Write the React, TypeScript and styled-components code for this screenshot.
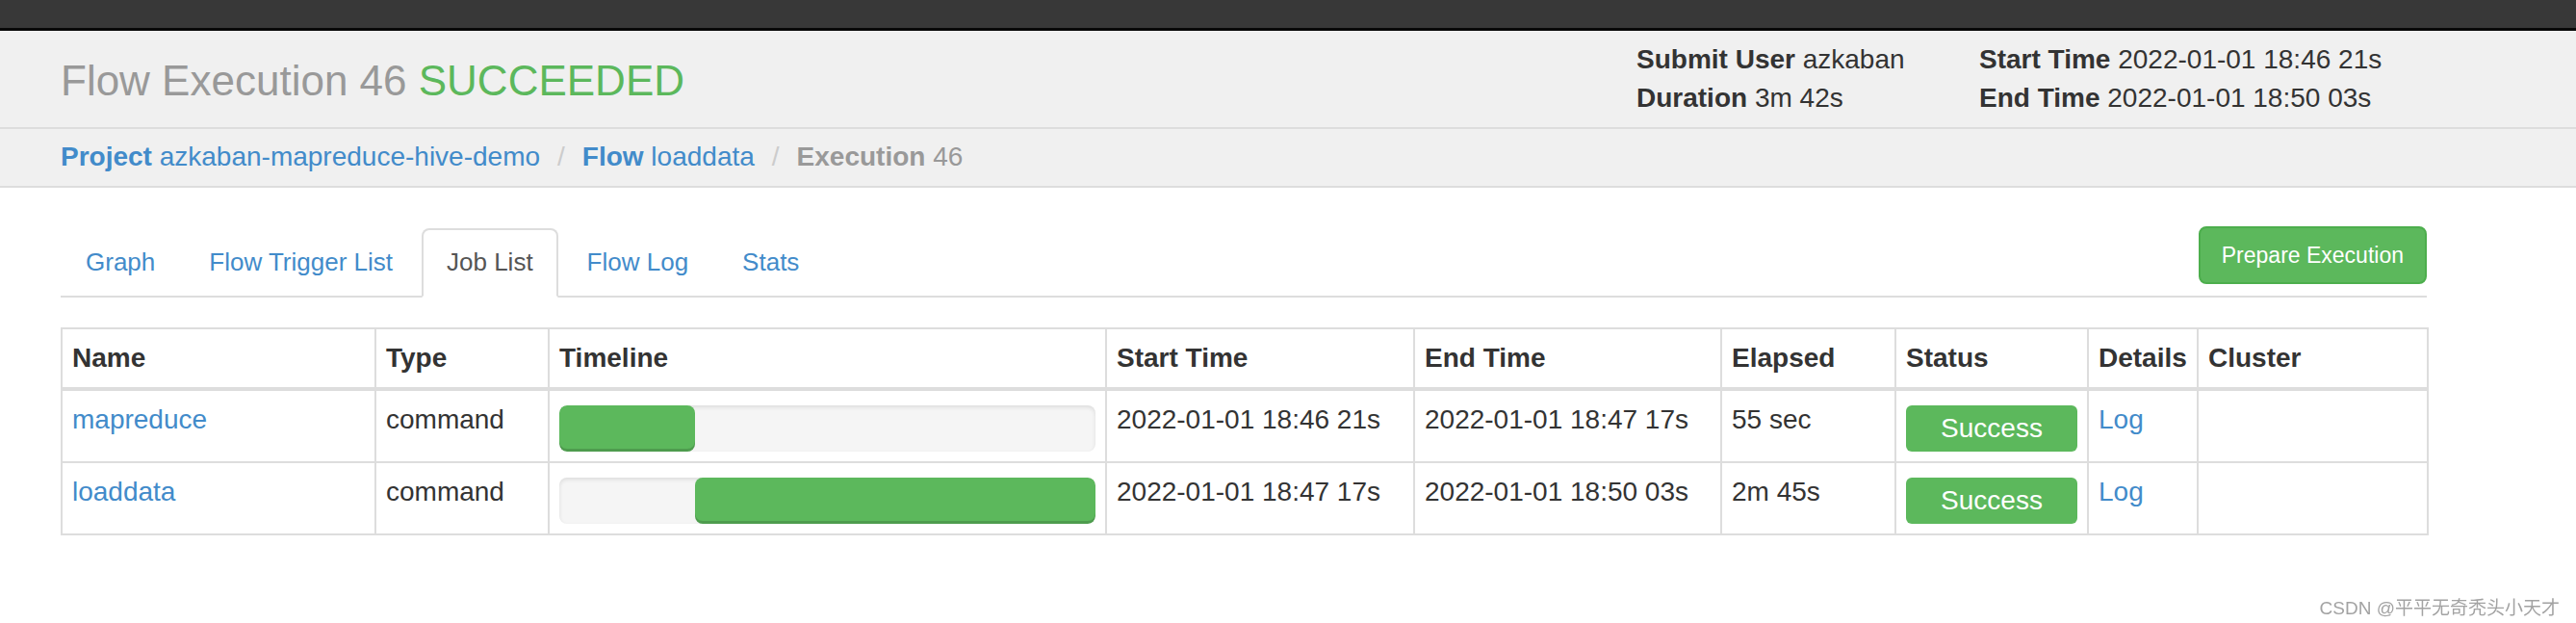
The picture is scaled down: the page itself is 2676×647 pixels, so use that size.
import React from 'react';
import styled, { createGlobalStyle } from 'styled-components';

const GlobalStyle = createGlobalStyle`
    html, body {
        margin: 0;
        padding: 0;
        background: #fff;
    }
    body {
        font-family: "Liberation Sans", Arial, "Noto Sans CJK SC", sans-serif;
        font-size: 28px;
        line-height: 40px;
        color: #333;
    }
`;

const TopNav = styled.div`
    height: 29px;
    background: #383838;
    border-bottom: 3px solid #080808;
`;

const PageHeader = styled.div`
    display: flex;
    align-items: center;
    height: 100px;
    padding: 0 200px 0 63px;
    background: #f0f0f0;
    border-bottom: 2px solid #ddd;
`;

const Title = styled.h1`
    flex: 1;
    margin: 0;
    padding-top: 4px;
    font-size: 44px;
    line-height: 52px;
    font-weight: normal;
    color: #999;
`;

const TitleStatus = styled.span`
    color: #5cb85c;
`;

const MetaGrid = styled.div`
    display: grid;
    grid-template-columns: 356px 420px;
`;

const MetaItem = styled.div`
    white-space: nowrap;
`;

const Breadcrumb = styled.div`
    display: flex;
    padding: 9px 63px 10px;
    background: #f0f0f0;
    border-bottom: 2px solid #ddd;
`;

const Crumb = styled.a<{ $active?: boolean }>`
    color: ${(p) => (p.$active ? '#999' : '#428bca')};
    text-decoration: none;
    white-space: nowrap;
`;

const Separator = styled.span`
    padding: 0 18px;
    color: #ccc;
`;

const Content = styled.div`
    width: 2458px;
    margin: 42px 0 0 63px;
`;

const TabBar = styled.ul`
    display: flex;
    margin: 0;
    padding: 0;
    list-style: none;
    border-bottom: 2px solid #ddd;
`;

const TabItem = styled.li`
    margin: 0 4px -2px 0;
`;

const TabLink = styled.a<{ $active?: boolean }>`
    display: block;
    padding: 13px 24px 15px;
    font-size: 26px;
    line-height: 40px;
    border: 2px solid transparent;
    border-radius: 8px 8px 0 0;
    text-decoration: none;
    color: ${(p) => (p.$active ? '#555' : '#428bca')};
    background: ${(p) => (p.$active ? '#fff' : 'transparent')};
    border-color: ${(p) => (p.$active ? '#ddd #ddd transparent' : 'transparent')};
`;

const ButtonItem = styled.li`
    margin-left: auto;
    margin-top: -2px;
    align-self: flex-start;
`;

const PrepareButton = styled.button`
    height: 60px;
    padding: 0 22px;
    background: #5cb85c;
    border: 2px solid #4cae4c;
    border-radius: 8px;
    color: #fff;
    font-family: "Liberation Sans", Arial, sans-serif;
    font-size: 23px;
    cursor: pointer;
`;

const JobTable = styled.table`
    width: 2458px;
    margin-top: 31px;
    border-collapse: collapse;
    table-layout: fixed;
    border: 2px solid #ddd;
`;

const Col = styled.col<{ $w: number }>`
    width: ${(p) => p.$w}px;
`;

const HeadCell = styled.th`
    padding: 10px;
    text-align: left;
    font-weight: bold;
    vertical-align: top;
    border: 2px solid #ddd;
    border-bottom-width: 4px;
`;

const Cell = styled.td`
    padding: 10px;
    vertical-align: top;
    white-space: nowrap;
    border: 2px solid #ddd;
`;

const TableLink = styled.a`
    color: #428bca;
    text-decoration: none;
`;

const Timeline = styled.div`
    height: 48px;
    margin-top: 5px;
    background: #f5f5f5;
    border-radius: 8px;
    box-shadow: inset 0 2px 4px rgba(0, 0, 0, 0.1);
    overflow: hidden;
`;

const TimelineBar = styled.div`
    height: 100%;
    background: #5cb85c;
    border-radius: 8px;
    box-shadow: inset 0 -3px 0 rgba(0, 0, 0, 0.15);
`;

const StatusLabel = styled.div`
    height: 48px;
    margin-top: 5px;
    line-height: 48px;
    text-align: center;
    color: #fff;
    background: #5cb85c;
    border-radius: 6px;
`;

const Watermark = styled.div`
    position: fixed;
    right: 17px;
    bottom: 3px;
    font-size: 19px;
    line-height: 24px;
    color: #a3a3a3;
    font-family: "Liberation Sans", Arial, "Noto Sans CJK SC", sans-serif;
`;

interface Job {
    name: string;
    type: string;
    start: number;
    end: number;
    startText: string;
    endText: string;
    elapsed: string;
}

// seconds since 18:00:00
const jobs: Job[] = [
    { name: 'mapreduce', type: 'command', start: 46 * 60 + 21, end: 47 * 60 + 17, startText: '2022-01-01 18:46 21s', endText: '2022-01-01 18:47 17s', elapsed: '55 sec' },
    { name: 'loaddata', type: 'command', start: 47 * 60 + 17, end: 50 * 60 + 3, startText: '2022-01-01 18:47 17s', endText: '2022-01-01 18:50 03s', elapsed: '2m 45s' },
];

const flowStart = jobs[0].start;
const flowEnd = jobs[jobs.length - 1].end;

const tabs = ['Graph', 'Flow Trigger List', 'Job List', 'Flow Log', 'Stats'];
const columns: [string, number][] = [
    ['Name', 326], ['Type', 180], ['Timeline', 579], ['Start Time', 320], ['End Time', 319],
    ['Elapsed', 181], ['Status', 200], ['Details', 114], ['Cluster', 239],
];

const App = () => {
    const total = flowEnd - flowStart;

    return (
        <>
            <GlobalStyle />
            <TopNav />
            <PageHeader>
                <Title>Flow Execution 46 <TitleStatus>SUCCEEDED</TitleStatus></Title>
                <MetaGrid>
                    <MetaItem><b>Submit User</b> azkaban</MetaItem>
                    <MetaItem><b>Start Time</b> 2022-01-01 18:46 21s</MetaItem>
                    <MetaItem><b>Duration</b> 3m 42s</MetaItem>
                    <MetaItem><b>End Time</b> 2022-01-01 18:50 03s</MetaItem>
                </MetaGrid>
            </PageHeader>
            <Breadcrumb>
                <Crumb href="#"><b>Project</b> azkaban-mapreduce-hive-demo</Crumb>
                <Separator>/</Separator>
                <Crumb href="#"><b>Flow</b> loaddata</Crumb>
                <Separator>/</Separator>
                <Crumb $active><b>Execution</b> 46</Crumb>
            </Breadcrumb>
            <Content>
                <TabBar>
                    {tabs.map((t) => (
                        <TabItem key={t}>
                            <TabLink href="#" $active={t === 'Job List'}>{t}</TabLink>
                        </TabItem>
                    ))}
                    <ButtonItem>
                        <PrepareButton>Prepare Execution</PrepareButton>
                    </ButtonItem>
                </TabBar>
                <JobTable>
                    <colgroup>
                        {columns.map(([c, w]) => <Col key={c} $w={w} />)}
                    </colgroup>
                    <thead>
                        <tr>
                            {columns.map(([c]) => <HeadCell key={c}>{c}</HeadCell>)}
                        </tr>
                    </thead>
                    <tbody>
                        {jobs.map((job) => (
                            <tr key={job.name}>
                                <Cell><TableLink href="#">{job.name}</TableLink></Cell>
                                <Cell>{job.type}</Cell>
                                <Cell>
                                    <Timeline>
                                        <TimelineBar
                                            style={{
                                                marginLeft: `${((job.start - flowStart) / total) * 100}%`,
                                                width: `${((job.end - job.start) / total) * 100}%`,
                                            }}
                                        />
                                    </Timeline>
                                </Cell>
                                <Cell>{job.startText}</Cell>
                                <Cell>{job.endText}</Cell>
                                <Cell>{job.elapsed}</Cell>
                                <Cell><StatusLabel>Success</StatusLabel></Cell>
                                <Cell><TableLink href="#">Log</TableLink></Cell>
                                <Cell></Cell>
                            </tr>
                        ))}
                    </tbody>
                </JobTable>
            </Content>
            <Watermark>CSDN @平平无奇秃头小天才</Watermark>
        </>
    );
};

export default App;
